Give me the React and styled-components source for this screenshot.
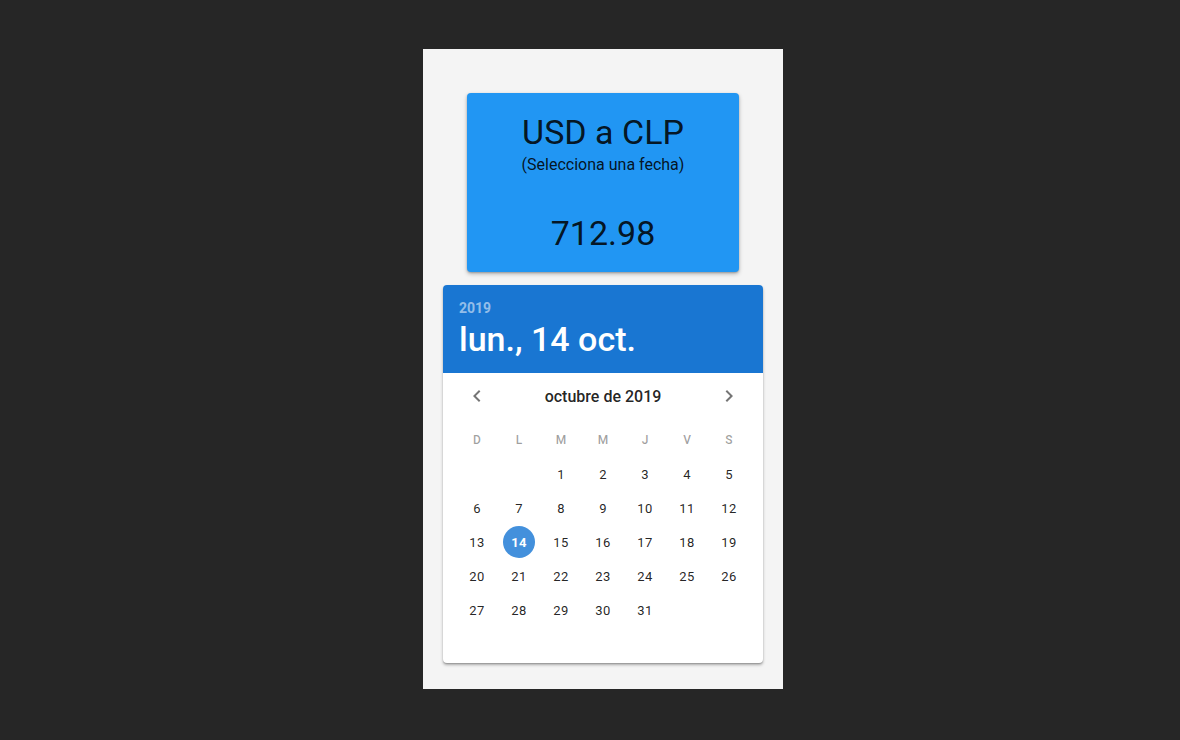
import React from 'react';
import styled, { createGlobalStyle } from 'styled-components';

const GlobalStyle = createGlobalStyle`
  html, body {
    margin: 0;
    padding: 0;
    background: #262626;
    font-family: Roboto, "Noto Sans", sans-serif;
  }
`;

const Page = styled.div`
  min-height: 740px;
  padding: 49px 0 0 423px;
  box-sizing: border-box;
`;

const Panel = styled.div`
  width: 360px;
  height: 640px;
  background: #f4f4f4;
  display: flex;
  flex-direction: column;
  align-items: center;
  padding-top: 44px;
  box-sizing: border-box;
`;

const RateCard = styled.div`
  width: 272px;
  height: 179px;
  background: #2196f3;
  border-radius: 4px;
  box-shadow: 0 2px 4px rgba(0, 0, 0, 0.25), 0 1px 2px rgba(0, 0, 0, 0.2);
  color: rgba(0, 0, 0, 0.87);
  text-align: center;
  display: flex;
  flex-direction: column;
  padding-top: 19px;
  box-sizing: border-box;
`;

const Title = styled.div`
  font-size: 34px;
  line-height: 40px;
`;

const Subtitle = styled.div`
  font-size: 16px;
  line-height: 20px;
  margin-top: 3px;
`;

const Rate = styled.div`
  font-size: 34px;
  line-height: 40px;
  margin-top: 38px;
`;

const Picker = styled.div`
  width: 320px;
  height: 378px;
  margin-top: 13px;
  background: #fff;
  border-radius: 4px;
  overflow: hidden;
  box-shadow: 0 2px 3px rgba(0, 0, 0, 0.3), 0 1px 1px rgba(0, 0, 0, 0.14);
`;

const Toolbar = styled.div`
  height: 88px;
  background: #1976d2;
  padding: 14px 16px 0;
  box-sizing: border-box;
`;

const Year = styled.div`
  font-size: 14px;
  font-weight: 700;
  line-height: 18px;
  color: rgba(255, 255, 255, 0.54);
`;

const DateLabel = styled.div`
  font-size: 34px;
  font-weight: 500;
  line-height: 40px;
  color: #fff;
  margin-top: 2px;
`;

const Body = styled.div`
  padding: 0 13px;
`;

const MonthBar = styled.div`
  height: 46px;
  display: flex;
  align-items: center;
  justify-content: space-between;
`;

const ArrowBtn = styled.button`
  width: 42px;
  height: 42px;
  border: none;
  background: none;
  padding: 0;
  display: flex;
  align-items: center;
  justify-content: center;
  color: rgba(0, 0, 0, 0.54);
  cursor: pointer;
`;

const MonthTitle = styled.div`
  font-size: 16px;
  font-weight: 500;
  color: rgba(0, 0, 0, 0.87);
`;

const Grid = styled.div`
  display: grid;
  grid-template-columns: repeat(7, 42px);
  grid-auto-rows: 34px;
  margin-top: 4px;
`;

const WeekDay = styled.div`
  display: flex;
  align-items: center;
  justify-content: center;
  font-size: 12px;
  font-weight: 500;
  color: rgba(0, 0, 0, 0.38);
`;

const Day = styled.div`
  display: flex;
  align-items: center;
  justify-content: center;
`;

const DayCircle = styled.span`
  width: 32px;
  height: 32px;
  border-radius: 50%;
  display: flex;
  align-items: center;
  justify-content: center;
  font-size: 13px;
  letter-spacing: 0.4px;
  font-weight: ${(p) => (p.$selected ? 700 : 400)};
  color: ${(p) => (p.$selected ? '#fff' : 'rgba(0, 0, 0, 0.87)')};
  background: ${(p) => (p.$selected ? '#4390dc' : 'transparent')};
`;

const Arrow = ({ dir }) => (
  <svg width="24" height="24" viewBox="0 0 24 24" fill="currentColor">
    {dir === 'left' ? (
      <path d="M15.41 16.59L10.83 12l4.58-4.59L14 6l-6 6 6 6 1.41-1.41z" />
    ) : (
      <path d="M8.59 16.59L13.17 12 8.59 7.41 10 6l6 6-6 6-1.41-1.41z" />
    )}
  </svg>
);

const weekDays = ['D', 'L', 'M', 'M', 'J', 'V', 'S'];
const cells = [null, null, ...Array.from({ length: 31 }, (_, i) => i + 1)];

const App = () => {
  return (
    <Page>
      <GlobalStyle />
      <Panel>
        <RateCard>
          <Title>USD a CLP</Title>
          <Subtitle>(Selecciona una fecha)</Subtitle>
          <Rate>712.98</Rate>
        </RateCard>
        <Picker>
          <Toolbar>
            <Year>2019</Year>
            <DateLabel>lun., 14 oct.</DateLabel>
          </Toolbar>
          <Body>
            <MonthBar>
              <ArrowBtn><Arrow dir="left" /></ArrowBtn>
              <MonthTitle>octubre de 2019</MonthTitle>
              <ArrowBtn><Arrow dir="right" /></ArrowBtn>
            </MonthBar>
            <Grid>
              {weekDays.map((d, i) => (
                <WeekDay key={i}>{d}</WeekDay>
              ))}
              {cells.map((d, i) => (
                <Day key={i}>
                  {d && <DayCircle $selected={d === 14}>{d}</DayCircle>}
                </Day>
              ))}
            </Grid>
          </Body>
        </Picker>
      </Panel>
    </Page>
  );
};

export default App;
